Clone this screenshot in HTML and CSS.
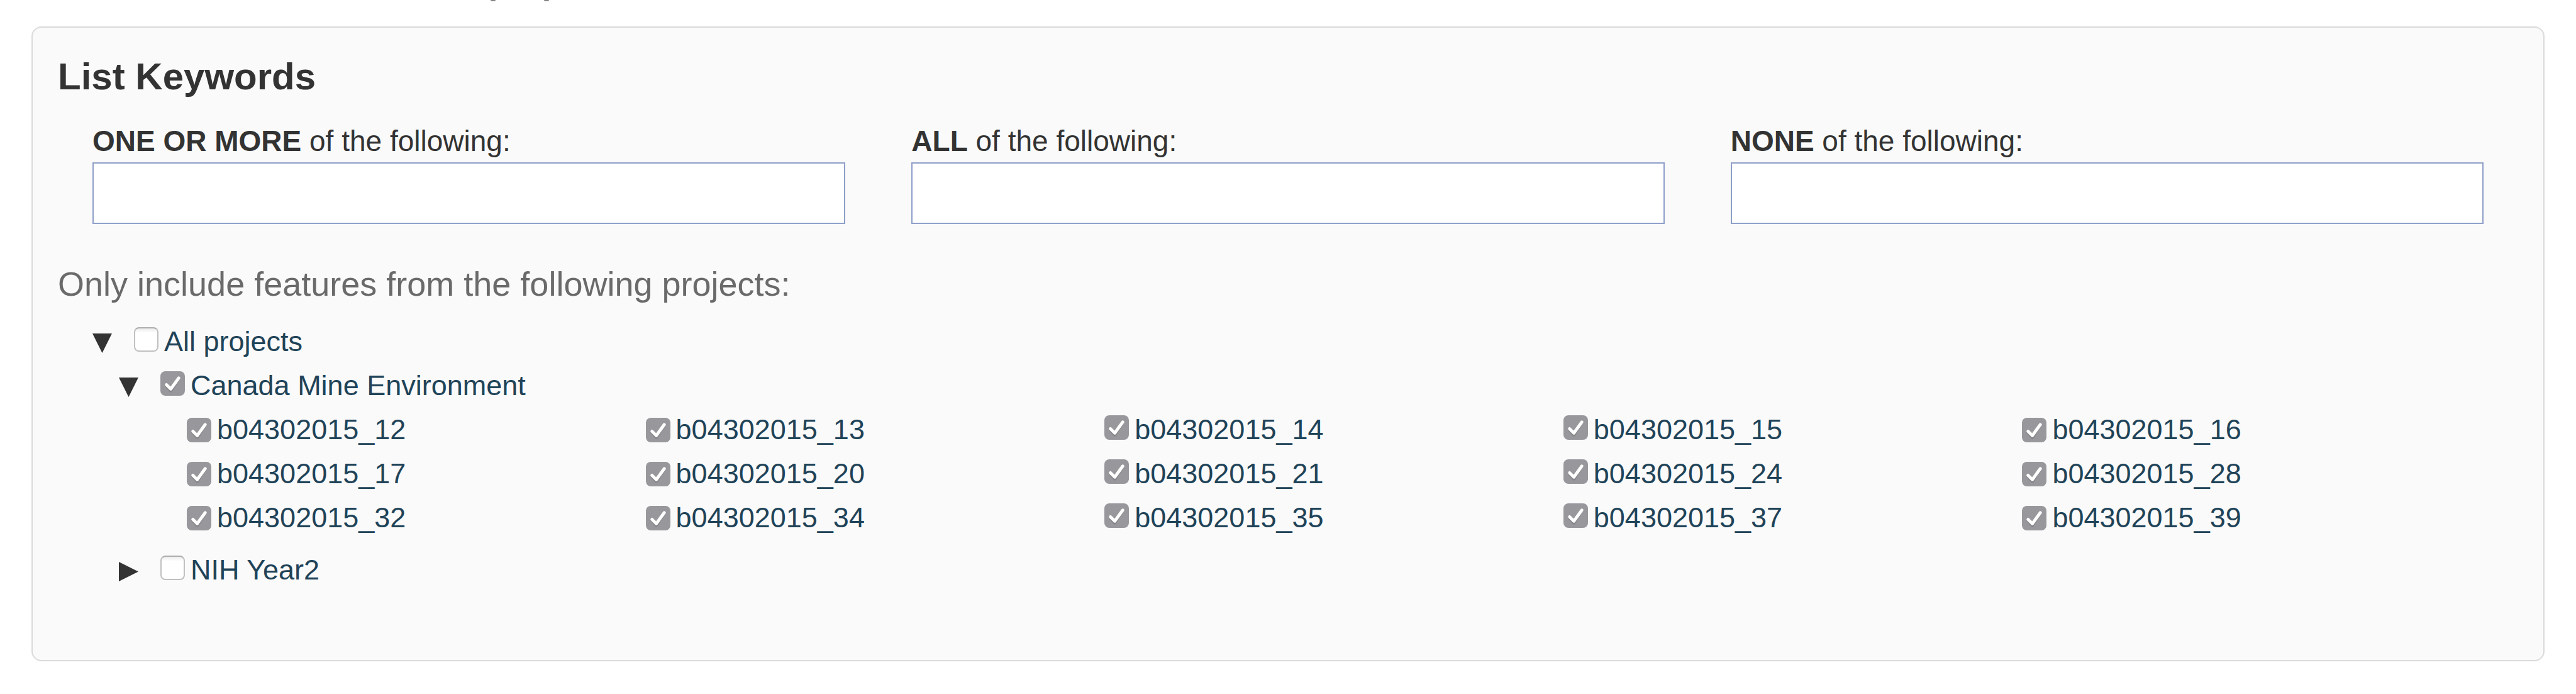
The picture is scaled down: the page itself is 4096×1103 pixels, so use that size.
FILE: index.html
```html
<!DOCTYPE html>
<html lang="en">
<head>
<meta charset="utf-8">
<title>List Keywords</title>
<link rel="stylesheet" href="styles.css">
</head>
<body>
<div class="cutoff" aria-hidden="true"><span class="tail"></span><span class="tail"></span></div>
<main class="panel">
  <h1 class="title">List Keywords</h1>
  <div class="keywords">
    <div class="field">
      <label class="field-label" for="kw-any"><strong>ONE OR MORE</strong> of the following:</label>
      <input class="field-input" id="kw-any" type="text">
    </div>
    <div class="field">
      <label class="field-label" for="kw-all"><strong>ALL</strong> of the following:</label>
      <input class="field-input" id="kw-all" type="text">
    </div>
    <div class="field">
      <label class="field-label" for="kw-none"><strong>NONE</strong> of the following:</label>
      <input class="field-input" id="kw-none" type="text">
    </div>
  </div>
  <p class="intro">Only include features from the following projects:</p>
  <div class="tree">
    <div class="row">
      <button class="toggle" type="button" aria-label="Collapse" aria-expanded="true"><svg class="arrow" viewBox="0 0 32 32"><path d="M0 0H32L16 32Z"/></svg></button>
      <input class="box" id="all" type="checkbox"><label class="name" for="all">All projects</label>
    </div>
    <div class="branch">
      <div class="row">
        <button class="toggle" type="button" aria-label="Collapse" aria-expanded="true"><svg class="arrow" viewBox="0 0 32 32"><path d="M0 0H32L16 32Z"/></svg></button>
        <input class="box" id="canada" type="checkbox" checked><label class="name" for="canada">Canada Mine Environment</label>
      </div>
      <div class="leaves">
        <div class="row leaf"><input class="box" id="p12" type="checkbox" checked><label class="name" for="p12">b04302015_12</label></div>
        <div class="row leaf"><input class="box" id="p13" type="checkbox" checked><label class="name" for="p13">b04302015_13</label></div>
        <div class="row leaf"><input class="box" id="p14" type="checkbox" checked><label class="name" for="p14">b04302015_14</label></div>
        <div class="row leaf"><input class="box" id="p15" type="checkbox" checked><label class="name" for="p15">b04302015_15</label></div>
        <div class="row leaf"><input class="box" id="p16" type="checkbox" checked><label class="name" for="p16">b04302015_16</label></div>
        <div class="row leaf"><input class="box" id="p17" type="checkbox" checked><label class="name" for="p17">b04302015_17</label></div>
        <div class="row leaf"><input class="box" id="p20" type="checkbox" checked><label class="name" for="p20">b04302015_20</label></div>
        <div class="row leaf"><input class="box" id="p21" type="checkbox" checked><label class="name" for="p21">b04302015_21</label></div>
        <div class="row leaf"><input class="box" id="p24" type="checkbox" checked><label class="name" for="p24">b04302015_24</label></div>
        <div class="row leaf"><input class="box" id="p28" type="checkbox" checked><label class="name" for="p28">b04302015_28</label></div>
        <div class="row leaf"><input class="box" id="p32" type="checkbox" checked><label class="name" for="p32">b04302015_32</label></div>
        <div class="row leaf"><input class="box" id="p34" type="checkbox" checked><label class="name" for="p34">b04302015_34</label></div>
        <div class="row leaf"><input class="box" id="p35" type="checkbox" checked><label class="name" for="p35">b04302015_35</label></div>
        <div class="row leaf"><input class="box" id="p37" type="checkbox" checked><label class="name" for="p37">b04302015_37</label></div>
        <div class="row leaf"><input class="box" id="p39" type="checkbox" checked><label class="name" for="p39">b04302015_39</label></div>
      </div>
      <div class="row">
        <button class="toggle" type="button" aria-label="Expand" aria-expanded="false"><svg class="arrow" viewBox="0 0 32 32"><path d="M0 0L32 16L0 32Z"/></svg></button>
        <input class="box" id="nih" type="checkbox"><label class="name" for="nih">NIH Year2</label>
      </div>
    </div>
  </div>
</main>
</body>
</html>
```
FILE: styles.css
```css
* {
  box-sizing: border-box;
}

body {
  margin: 0;
  background: #fff;
  color: #333;
  font-family: "Liberation Sans", Arial, Helvetica, sans-serif;
  font-size: 46px;
}

/* Lower ends of the letters of the line scrolled out above the panel */
.cutoff {
  display: flex;
  gap: 77px;
  padding-left: 780px;
}

.tail {
  width: 8px;
  height: 2px;
  border-radius: 0 0 2px 2px;
  background: #858585;
}

.panel {
  margin: 40px 50px 0;
  padding: 42px 40px 108px;
  border: 2px solid #dadada;
  border-radius: 16px;
  background: #fafafa;
}

.title {
  margin: 0 0 38px;
  font-size: 60px;
  font-weight: bold;
  line-height: 72px;
}

.keywords {
  display: grid;
  grid-template-columns: repeat(3, 1fr);
  gap: 105px;
  padding: 0 55px;
}

.field {
  display: flex;
  flex-direction: column;
  gap: 6px;
}

.field-label {
  line-height: 56px;
}

.field-input {
  width: 100%;
  height: 98px;
  padding: 0 12px;
  border: 2px solid #8f9fc8;
  border-radius: 0;
  background: #fff;
  color: inherit;
  font: inherit;
}

.intro {
  margin: 62px 0 24px;
  color: #6a6a6a;
  font-size: 54px;
  line-height: 66px;
}

.tree {
  padding: 0 55px;
}

.branch {
  padding-left: 42px;
}

.row {
  display: flex;
  align-items: flex-end;
}

.toggle {
  flex: none;
  width: 32px;
  margin: 0 34px 17px 0;
  padding: 0;
  border: 0;
  background: none;
}

.arrow {
  display: block;
  width: 31px;
  height: 31px;
  fill: #333;
}

.box {
  appearance: none;
  flex: none;
  width: 39px;
  height: 39px;
  margin: 0 9px 19px 0;
  border: 2px solid #c0c0c0;
  border-top-color: #adadad;
  border-radius: 8px;
  background: linear-gradient(#ececec, #fff 20%);
}

.box:checked {
  border: 0;
  background: #98979c url("data:image/svg+xml,%3Csvg xmlns='http://www.w3.org/2000/svg' viewBox='0 0 40 40' fill='none' stroke-width='5' stroke-linecap='round' stroke-linejoin='round'%3E%3Cpath d='M10 24L17 32L29 13' stroke='%23858489'/%3E%3Cpath d='M10 22L17 29L30 11' stroke='%23fff'/%3E%3C/svg%3E") center / 100% 100% no-repeat;
}

.name {
  color: #1f4358;
  font-size: 45px;
  line-height: 70px;
}

.leaves {
  display: grid;
  grid-template-columns: repeat(5, 1fr);
  padding-left: 66px;
  margin: 0 4px 13px 42px;
}

.leaf .box {
  margin-bottom: 15px;
}

.leaf:nth-child(5n + 3) .box,
.leaf:nth-child(5n + 4) .box {
  margin-bottom: 19px;
}
```
